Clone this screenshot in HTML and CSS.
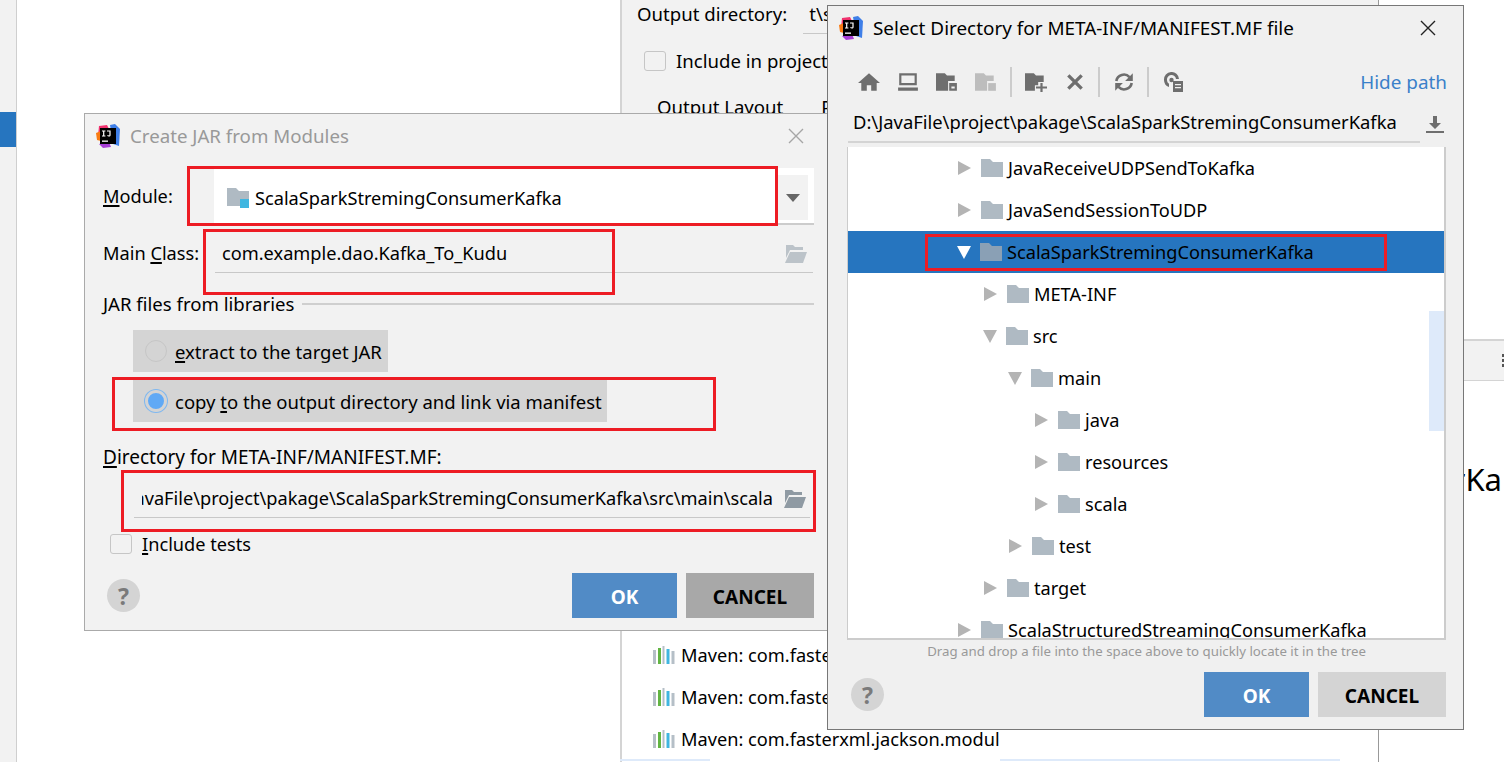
FILE: index.html
```html
<!DOCTYPE html>
<html lang="en">
<head>
<meta charset="utf-8">
<title>Create JAR from Modules</title>
<link rel="stylesheet" href="styles.css">
</head>
<body>
<svg class="defs" width="0" height="0" aria-hidden="true">
  <defs>
    <symbol id="folder" viewBox="0 0 22 18"><path d="M0 0h9l3 3h10v15H0z" fill="currentColor"/></symbol>
    <symbol id="open" viewBox="0 0 22 18"><path d="M1 0h7l2 2h8v3H5L1 13z" fill="currentColor"/><path d="M5 7h17l-4 11H0z" fill="currentColor"/></symbol>
    <symbol id="ij" viewBox="0 0 24 24">
      <path d="M3 2l8-1 2 4-6 8-5-1z" fill="#f0326e"/>
      <path d="M0 9l5-2 3 6-3 4-4-1z" fill="#f97a12"/>
      <path d="M14 1l5-1 5 5-1 17-6-2z" fill="#3f7fe8"/>
      <path d="M3 20l10-2 2 5-8 1z" fill="#a83fd6"/>
      <rect x="4" y="4" width="16" height="16" fill="#000"/>
      <rect x="6" y="16.500" width="6" height="1.300" fill="#fff"/>
      <path d="M6 6.500h3.400v1h-1.100v4h1.100v1H6v-1h1.100v-4H6zM11 6.500h3.600v4.600c0 1-.7 1.500-1.700 1.500-.9 0-1.500-.4-1.800-1l.9-.6c.2.300.5.500.8.500.4 0 .6-.2.600-.6V7.500H11z" fill="#fff"/>
    </symbol>
    <symbol id="maven" viewBox="0 0 22 18">
      <rect x="0" y="4" width="3" height="14" fill="#b5bfc7"/>
      <rect x="5" y="2" width="3" height="16" fill="#62b543"/>
      <rect x="9.500" y="0" width="2" height="18" fill="#b5bfc7"/>
      <rect x="13.500" y="3" width="3" height="15" fill="#40b6e0"/>
      <rect x="18.500" y="5" width="3" height="13" fill="#b5bfc7"/>
    </symbol>
  </defs>
</svg>

<div class="desktop">
  <div class="rail"><div class="rail-active"></div></div>
  <div class="blank"></div>
  <div class="panel">
    <div class="panel-top">
      <div class="out-row"><span>Output directory:</span><span class="out-val">t\s</span></div>
      <div class="inc-row"><span class="check"></span><span>Include in project build</span></div>
      <div class="tabs-row"><span>Output Layout</span><span>Pre-processing</span></div>
    </div>
    <div class="panel-bottom">
      <div class="maven"><svg class="ic-maven"><use href="#maven"/></svg><span>Maven: com.fasterxml.jackson.core</span></div>
      <div class="maven"><svg class="ic-maven"><use href="#maven"/></svg><span>Maven: com.fasterxml.jackson.core</span></div>
      <div class="maven"><svg class="ic-maven"><use href="#maven"/></svg><span>Maven: com.fasterxml.jackson.module</span></div>
      <div class="row-hl"><i class="hl-a"></i><i class="hl-b"></i></div>
    </div>
  </div>
  <div class="side">
    <div class="side-tab"><i class="grip"></i></div>
    <div class="side-big">erKa</div>
  </div>
</div>

<section class="win win-jar">
  <header class="title">
    <svg class="ic-ij"><use href="#ij"/></svg>
    <span class="title-text muted">Create JAR from Modules</span>
    <svg class="close" viewBox="0 0 16 16"><path d="M1 1l14 14M15 1L1 15" stroke="#a6a6a6" stroke-width="1.400" fill="none"/></svg>
  </header>
  <div class="form">
    <div class="module-row">
      <label class="lbl"><u>M</u>odule:</label>
      <div class="combo">
        <svg class="ic-mod" viewBox="0 0 22 20"><path d="M0 0h9l3 3h10v15H0z" fill="#afbac3"/><rect x="13" y="11" width="9" height="9" fill="#40b6e0"/></svg>
        <span class="combo-text">ScalaSparkStremingConsumerKafka</span>
        <span class="combo-btn"><i class="tri-down"></i></span>
      </div>
    </div>
    <div class="class-row">
      <label class="lbl">Main <u>C</u>lass:</label>
      <div class="field"><span>com.example.dao.Kafka_To_Kudu</span><svg class="ic-open faded"><use href="#open"/></svg></div>
    </div>
    <div class="group"><span>JAR files from libraries</span><i></i></div>
    <div class="radio first"><i class="dot"></i><span><u>e</u>xtract to the target JAR</span></div>
    <div class="radio"><i class="dot on"></i><span>copy <u>t</u>o the output directory and link via manifest</span></div>
    <label class="lbl dir-lbl"><u>D</u>irectory for META-INF/MANIFEST.MF:</label>
    <div class="dir-field">
      <div class="clip"><span>D:\JavaFile\project\pakage\ScalaSparkStremingConsumerKafka\src\main\scala</span></div>
      <svg class="ic-open dark"><use href="#open"/></svg>
    </div>
    <div class="tests"><span class="check"></span><span><u>I</u>nclude tests</span></div>
    <footer class="foot">
      <span class="help">?</span>
      <span class="btn ok">OK</span>
      <span class="btn cancel dark-cancel">CANCEL</span>
    </footer>
  </div>
</section>

<section class="win win-dir">
  <header class="title">
    <svg class="ic-ij"><use href="#ij"/></svg>
    <span class="title-text">Select Directory for META-INF/MANIFEST.MF file</span>
    <svg class="close" viewBox="0 0 16 16"><path d="M1 1l14 14M15 1L1 15" stroke="#222" stroke-width="1.400" fill="none"/></svg>
  </header>
  <div class="toolbar">
    <span class="tool"><svg viewBox="0 0 20 18"><path d="M10 1L0 10h3v7h5v-5h4v5h5v-7h3z" fill="#6e6e6e"/></svg></span>
    <span class="tool"><svg viewBox="0 0 20 18"><path d="M2 1h16v11H2zM4 3v7h12V3zM1 14h18v3H1z" fill="#6e6e6e" fill-rule="evenodd"/></svg></span>
    <span class="tool"><svg viewBox="0 0 20 18"><path d="M0 1h8l2 2h7v5h-6v9H0z" fill="#6e6e6e"/><path d="M12 10h7v7h-7zM14 13v2h3v-2z" fill="#6e6e6e" fill-rule="evenodd"/></svg></span>
    <span class="tool off"><svg viewBox="0 0 20 18"><path d="M0 1h8l2 2h7v5h-6v9H0z" fill="#bdbdbd"/><rect x="12" y="10" width="7" height="7" fill="#bdbdbd"/></svg></span>
    <i class="sep"></i>
    <span class="tool"><svg viewBox="0 0 20 18"><path d="M0 1h8l2 2h7v6h-5v3H9v5H0z" fill="#6e6e6e"/><path d="M14 10h2v3h4v2h-4v3h-2v-3h-4v-2h4z" fill="#6e6e6e"/></svg></span>
    <span class="tool"><svg viewBox="0 0 18 18"><path d="M3 3l12 12M15 3L3 15" stroke="#6e6e6e" stroke-width="3" fill="none"/></svg></span>
    <i class="sep"></i>
    <span class="tool"><svg viewBox="0 0 20 18"><path d="M3 8a7 7 0 0 1 12-3.500" stroke="#6e6e6e" stroke-width="2.400" fill="none"/><path d="M17 10a7 7 0 0 1-12 3.500" stroke="#6e6e6e" stroke-width="2.400" fill="none"/><path d="M18 1v7h-7zM2 17v-7h7z" fill="#6e6e6e"/></svg></span>
    <i class="sep"></i>
    <span class="tool"><svg viewBox="0 0 20 20"><path d="M1 8a7.500 7.500 0 0 1 15-1h-3a4.500 4.500 0 0 0-9 1c0 1.500.7 3 2 3.800V15A7.500 7.500 0 0 1 1 8z" fill="#6e6e6e"/><circle cx="8.500" cy="8" r="2.200" fill="#6e6e6e"/><path d="M10 9h10v11H10zM12 12v1.300h6V12zM12 15v1.300h6V15z" fill="#6e6e6e" fill-rule="evenodd"/></svg></span>
    <a class="hide-path">Hide path</a>
  </div>
  <div class="path-row">
    <div class="path-input">D:\JavaFile\project\pakage\ScalaSparkStremingConsumerKafka</div>
    <svg class="ic-dl" viewBox="0 0 18 18"><path d="M7 0h4v7h4l-6 6-6-6h4zM0 15h18v2H0z" fill="#6e6e6e"/></svg>
  </div>
  <div class="tree">
    <div class="node l0"><i class="tri-r"></i><svg class="ic-folder"><use href="#folder"/></svg><span>JavaReceiveUDPSendToKafka</span></div>
    <div class="node l0"><i class="tri-r"></i><svg class="ic-folder"><use href="#folder"/></svg><span>JavaSendSessionToUDP</span></div>
    <div class="node l0 sel"><i class="tri-d"></i><svg class="ic-folder"><use href="#folder"/></svg><span>ScalaSparkStremingConsumerKafka</span></div>
    <div class="node l1"><i class="tri-r"></i><svg class="ic-folder"><use href="#folder"/></svg><span>META-INF</span></div>
    <div class="node l1"><i class="tri-d"></i><svg class="ic-folder"><use href="#folder"/></svg><span>src</span></div>
    <div class="node l2"><i class="tri-d"></i><svg class="ic-folder"><use href="#folder"/></svg><span>main</span></div>
    <div class="node l3"><i class="tri-r"></i><svg class="ic-folder"><use href="#folder"/></svg><span>java</span></div>
    <div class="node l3"><i class="tri-r"></i><svg class="ic-folder"><use href="#folder"/></svg><span>resources</span></div>
    <div class="node l3"><i class="tri-r"></i><svg class="ic-folder"><use href="#folder"/></svg><span>scala</span></div>
    <div class="node l2"><i class="tri-r"></i><svg class="ic-folder"><use href="#folder"/></svg><span>test</span></div>
    <div class="node l1"><i class="tri-r"></i><svg class="ic-folder"><use href="#folder"/></svg><span>target</span></div>
    <div class="node l0"><i class="tri-r"></i><svg class="ic-folder"><use href="#folder"/></svg><span>ScalaStructuredStreamingConsumerKafka</span></div>
    <div class="thumb"></div>
  </div>
  <div class="hint">Drag and drop a file into the space above to quickly locate it in the tree</div>
  <footer class="foot">
    <span class="help">?</span>
    <span class="btn ok">OK</span>
    <span class="btn cancel">CANCEL</span>
  </footer>
</section>

<div class="mark m-module"></div>
<div class="mark m-class"></div>
<div class="mark m-copy"></div>
<div class="mark m-dir"></div>
<div class="mark m-tree"></div>
</body>
</html>
```
FILE: styles.css
```css
* { box-sizing: border-box; }
html, body { margin: 0; padding: 0; }
body {
  position: relative;
  width: 1504px;
  height: 762px;
  overflow: hidden;
  background: #fff;
  color: #000;
  font-family: "Noto Sans", "Open Sans", sans-serif;
  font-size: 18.2px;
  line-height: 24px;
}
u { text-underline-offset: 2px; text-decoration-thickness: 2px; }
i { display: block; font-style: normal; }
svg { display: block; flex: none; }
.defs { position: absolute; }

/* background IDE */
.desktop { display: flex; height: 762px; }
.rail { width: 17px; background: #f2f2f2; border-right: 1px solid #cfcfcf; padding-top: 112px; }
.rail-active { height: 35px; background: #2675bf; }
.blank { width: 603px; }
.panel { width: 758px; display: flex; flex-direction: column; border-left: 2px solid #d4d4d4; }
.panel-top { height: 630px; background: #f2f2f2; border-bottom: 1px solid #aaa; overflow: hidden; padding-left: 15px; font-size: 18.6px; }
.out-row { display: flex; align-items: flex-start; height: 24px; margin-top: 2px; white-space: nowrap; }
.out-val { height: 32px; margin-left: 16px; padding-left: 6px; border-bottom: 1px solid #c8c8c8; }
.inc-row { display: flex; align-items: center; margin-top: 23px; padding-left: 7px; height: 24px; white-space: nowrap; }
.inc-row .check { margin-right: 10px; }
.tabs-row { display: flex; gap: 38px; margin-top: 22px; padding-left: 20px; white-space: nowrap; }
.check { display: block; width: 22px; height: 20px; border: 1px solid #c6c6c6; border-radius: 3px; background: #f2f2f2; flex: none; }
.panel-bottom { flex: 1; padding-top: 4px; }
.maven { display: flex; align-items: center; height: 42px; width: 378px; padding-left: 31px; overflow: hidden; white-space: nowrap; }
.ic-maven { width: 22px; height: 18px; margin-right: 6px; }
.row-hl { display: flex; height: 2px; margin-left: -2px; margin-top: -1px; }
.hl-a { width: 90px; background: #deeafa; }
.hl-b { width: 340px; background: #deeafa; margin-left: 290px; }
.side { flex: 1; border-left: 1px solid #999; overflow: hidden; }
.side-tab { display: flex; justify-content: flex-end; align-items: center; height: 42px; margin-top: 339px; background: #f2f2f2; border-top: 2px solid #d4d4d4; border-bottom: 1px solid #d4d4d4; }
.grip { width: 2px; height: 13px; background: repeating-linear-gradient(#555 0 3px, transparent 3px 5px); }
.side-big { display: flex; justify-content: flex-end; font-size: 31px; line-height: 40px; margin-top: 78px; padding-right: 2px; white-space: nowrap; }

/* windows */
.win { position: absolute; background: #f2f2f2; }
.win-jar { left: 84px; top: 113px; width: 746px; height: 518px; border: 1px solid #aaa; }
.win-dir { left: 827px; top: 5px; width: 637px; height: 725px; border: 1px solid #777; background: #f0f0f0; }
.title { display: flex; align-items: center; height: 44px; padding-left: 11px; }
.ic-ij { width: 24px; height: 24px; margin-right: 10px; }
.title-text { flex: 1; font-size: 18.9px; white-space: nowrap; }
.muted { color: #999; font-size: 18.7px; }
.close { width: 16px; height: 16px; }
.win-jar .close { margin-right: 25px; }
.win-dir .close { margin-right: 27px; }

.form { padding: 10px 15px 0 18px; }
.module-row { display: flex; height: 58px; }
.lbl { display: block; white-space: nowrap; }
.module-row .lbl { margin-top: 16px; width: 111px; }
.combo { flex: 1; position: relative; display: flex; align-items: center; height: 57px; background: #fff; border-bottom: 2px solid #ccc; padding: 4px 0 0 13px; }
.ic-mod { width: 22px; height: 20px; margin-right: 6px; }
.combo-text { flex: 1; }
.combo-btn { display: flex; align-items: center; justify-content: center; width: 31px; height: 45px; margin-right: 6px; background: #f2f2f2; }
.tri-down { width: 0; height: 0; border-left: 7px solid transparent; border-right: 7px solid transparent; border-top: 8px solid #666; }
.class-row { display: flex; height: 48px; }
.class-row .lbl { margin-top: 15px; width: 112px; }
.field { flex: 1; display: flex; justify-content: space-between; align-items: flex-start; height: 47px; padding: 15px 6px 0 7px; margin-right: 1px; border-bottom: 1px solid #c8c8c8; }
.ic-open { width: 22px; height: 18px; margin-top: 4px; }
.faded { color: #bcc3c9; }
.dark { color: #8f9aa3; }
.group { display: flex; align-items: center; height: 24px; margin-top: 18px; white-space: nowrap; font-size: 18.6px; }
.group i { flex: 1; height: 2px; background: #cfcfcf; margin-left: 8px; }
.radio { display: flex; align-items: center; width: fit-content; height: 42px; margin-left: 30px; margin-top: 8px; padding: 2px 5px 0 0; background: #d4d4d4; font-size: 18.5px; white-space: nowrap; }
.radio.first { margin-top: 14px; padding-right: 6px; }
.dot { width: 22px; height: 22px; margin: -2px 8px 0 12px; border-radius: 50%; border: 1px solid #c6c6c6; background: #d4d4d4; }
.dot.on { background: #60a9f5; border: 3px solid #d4d4d4; box-shadow: 0 0 0 1px #7fb8f0; }
.dir-lbl { margin-top: 23px; font-size: 19px; }
.dir-field { display: flex; align-items: flex-start; height: 32px; margin-top: 17px; margin-left: 31px; margin-right: 4px; border-bottom: 1px solid #c8c8c8; padding-left: 8px; }
.clip { width: 631px; display: flex; justify-content: flex-end; overflow: hidden; white-space: nowrap; }
.dir-field .ic-open { margin: 4px 0 0 11px; }
.tests { display: flex; align-items: center; height: 24px; margin-top: 14px; margin-left: 7px; white-space: nowrap; }
.tests .check { margin-right: 10px; }
.foot { display: flex; align-items: flex-start; }
.form .foot { margin-top: 17px; }
.help { display: flex; align-items: center; justify-content: center; width: 33px; height: 33px; border-radius: 50%; background: #d4d4d4; color: #7a7a7a; font-weight: 700; font-size: 23px; margin-top: 6px; }
.form .help { margin-left: 4px; margin-right: 432px; }
.btn { display: flex; align-items: center; justify-content: center; height: 45px; padding-top: 2px; font-weight: 700; font-size: 19px; }
.ok { width: 105px; background: #518bc6; color: #fff; margin-right: 9px; }
.cancel { width: 128px; background: #d4d4d4; }
.dark-cancel { background: #a8a8a8; }

.toolbar { display: flex; align-items: center; height: 38px; margin-top: 13px; padding-left: 21px; }
.tool { display: flex; justify-content: center; width: 39px; }
.tool svg { width: 22px; height: 20px; }
.sep { width: 2px; height: 30px; background: #ccc; margin: 0 4px; }
.off + .sep { margin-left: 5px; }
.hide-path { margin-left: auto; margin-right: 16px; color: #3a80c9; font-size: 18.9px; }
.path-row { display: flex; height: 38px; padding-left: 20px; margin-top: 4px; }
.path-input { width: 572px; height: 38px; padding: 5px 0 0 5px; border-bottom: 2px solid #d4d4d4; font-size: 18.4px; white-space: nowrap; }
.ic-dl { width: 18px; height: 18px; margin: 11px 0 0 6px; }
.tree { position: relative; margin: 4px 17px 0 19px; height: 493px; background: #fff; border: solid #ccc; border-width: 0 2px 2px 1px; overflow: hidden; font-size: 18.2px; }
.node { display: flex; align-items: center; height: 42px; white-space: nowrap; }
.l0 { padding-left: 110px; }
.l1 { padding-left: 136px; }
.l2 { padding-left: 161px; }
.l3 { padding-left: 187px; }
.tri-r { width: 0; height: 0; margin-right: 10px; border-top: 7px solid transparent; border-bottom: 7px solid transparent; border-left: 13px solid #b4b4b4; }
.tri-d { width: 0; height: 0; margin-left: -1px; margin-right: 9px; border-left: 7.500px solid transparent; border-right: 7.500px solid transparent; border-top: 13px solid #b4b4b4; }
.ic-folder { width: 22px; height: 18px; color: #afbac3; margin-right: 5px; }
.sel { background: #2675bf; }
.sel .tri-d { border-top-color: #fff; }
.sel .ic-folder { color: #8aa0b5; }
.thumb { position: absolute; left: 581px; top: 164px; width: 15px; height: 120px; background: #deeafa; }
.hint { text-align: center; font-size: 13.250px; line-height: 18px; color: #999; margin-top: 2px; padding-left: 2px; }
.win-dir .foot { margin-top: 12px; padding-left: 23px; }
.win-dir .help { margin-right: 320px; }

/* red annotations */
.mark { position: absolute; border: 3px solid #ed1c24; }
.m-module { left: 187px; top: 166px; width: 591px; height: 60px; }
.m-class { left: 203px; top: 229px; width: 412px; height: 66px; }
.m-copy { left: 112px; top: 377px; width: 604px; height: 54px; }
.m-dir { left: 121px; top: 470px; width: 695px; height: 62px; }
.m-tree { left: 925px; top: 234px; width: 462px; height: 37px; }
```
